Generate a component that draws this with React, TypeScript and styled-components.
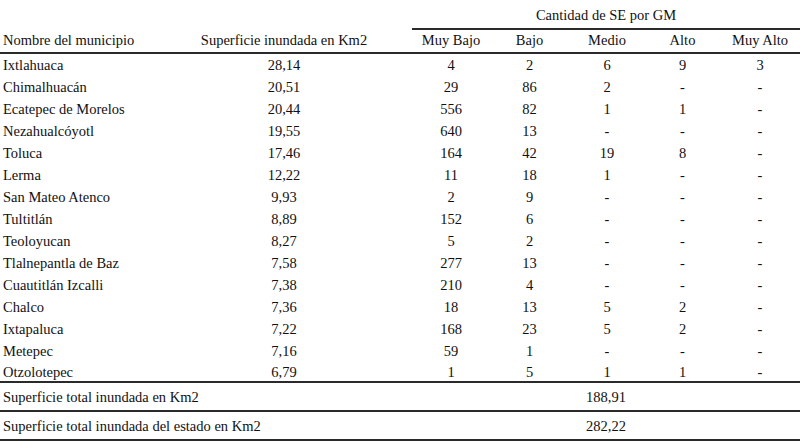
import { createGlobalStyle, styled } from 'styled-components';

const GlobalStyle = createGlobalStyle`
  html, body {
    margin: 0;
    padding: 0;
    background: #fff;
  }
  body {
    font-family: "Liberation Serif", "Times New Roman", serif;
    color: #111;
  }
`;

const rule = '2px solid #2a2a2a';

const Table = styled.table`
  width: 800px;
  border-collapse: collapse;
  table-layout: fixed;
  font-size: 14.5px;
  line-height: 16px;
`;

const GroupHead = styled.th`
  height: 29px;
  padding: 2px 0 0;
  font-weight: normal;
  text-align: center;
  vertical-align: middle;
  border-bottom: ${rule};
  box-sizing: border-box;
`;

const HeadCell = styled.th<{ $align?: 'left' | 'center' }>`
  height: 24px;
  padding: 0 0 4px ${(p) => (p.$align === 'left' ? '3px' : '0')};
  font-weight: normal;
  text-align: ${(p) => p.$align ?? 'center'};
  vertical-align: bottom;
  border-bottom: ${rule};
  box-sizing: border-box;
`;

const Row = styled.tr<{ $last?: boolean }>`
  border-bottom: ${(p) => (p.$last ? rule : 'none')};
`;

const Cell = styled.td<{ $align?: 'left' | 'center'; $h?: number }>`
  height: ${(p) => p.$h ?? 22}px;
  padding: 1px 0 0 ${(p) => (p.$align === 'left' ? '3px' : '0')};
  text-align: ${(p) => p.$align ?? 'center'};
  vertical-align: middle;
  white-space: nowrap;
  box-sizing: border-box;
`;

const TotalRow = styled.tr`
  border-bottom: ${rule};
`;

const cols = [156, 256, 78, 79, 76, 75, 80];

const rows: [string, string, string, string, string, string, string][] = [
  ['Ixtlahuaca', '28,14', '4', '2', '6', '9', '3'],
  ['Chimalhuacán', '20,51', '29', '86', '2', '-', '-'],
  ['Ecatepec de Morelos', '20,44', '556', '82', '1', '1', '-'],
  ['Nezahualcóyotl', '19,55', '640', '13', '-', '-', '-'],
  ['Toluca', '17,46', '164', '42', '19', '8', '-'],
  ['Lerma', '12,22', '11', '18', '1', '-', '-'],
  ['San Mateo Atenco', '9,93', '2', '9', '-', '-', '-'],
  ['Tultitlán', '8,89', '152', '6', '-', '-', '-'],
  ['Teoloyucan', '8,27', '5', '2', '-', '-', '-'],
  ['Tlalnepantla de Baz', '7,58', '277', '13', '-', '-', '-'],
  ['Cuautitlán Izcalli', '7,38', '210', '4', '-', '-', '-'],
  ['Chalco', '7,36', '18', '13', '5', '2', '-'],
  ['Ixtapaluca', '7,22', '168', '23', '5', '2', '-'],
  ['Metepec', '7,16', '59', '1', '-', '-', '-'],
  ['Otzolotepec', '6,79', '1', '5', '1', '1', '-'],
];

const levels = ['Muy Bajo', 'Bajo', 'Medio', 'Alto', 'Muy Alto'];

export default function App() {
  return (
    <>
      <GlobalStyle />
      <Table>
        <colgroup>
          {cols.map((w, i) => (
            <col key={i} style={{ width: w }} />
          ))}
        </colgroup>
        <thead>
          <tr>
            <HeadCell rowSpan={2} $align="left">
              Nombre del municipio
            </HeadCell>
            <HeadCell rowSpan={2}>Superficie inundada en Km2</HeadCell>
            <GroupHead colSpan={5}>Cantidad de SE por GM</GroupHead>
          </tr>
          <tr>
            {levels.map((l) => (
              <HeadCell key={l}>{l}</HeadCell>
            ))}
          </tr>
        </thead>
        <tbody>
          {rows.map((r, i) => {
            const h = i === rows.length - 1 ? 21 : 22;
            return (
              <Row key={r[0]} $last={i === rows.length - 1}>
                <Cell $align="left" $h={h}>
                  {r[0]}
                </Cell>
                {r.slice(1).map((v, j) => (
                  <Cell key={j} $h={h}>
                    {v}
                  </Cell>
                ))}
              </Row>
            );
          })}
          <TotalRow>
            <Cell colSpan={2} $align="left" $h={29}>
              Superficie total inundada en Km2
            </Cell>
            <Cell colSpan={5} $h={29}>
              188,91
            </Cell>
          </TotalRow>
          <TotalRow>
            <Cell colSpan={2} $align="left" $h={29}>
              Superficie total inundada del estado en Km2
            </Cell>
            <Cell colSpan={5} $h={29}>
              282,22
            </Cell>
          </TotalRow>
        </tbody>
      </Table>
    </>
  );
}
